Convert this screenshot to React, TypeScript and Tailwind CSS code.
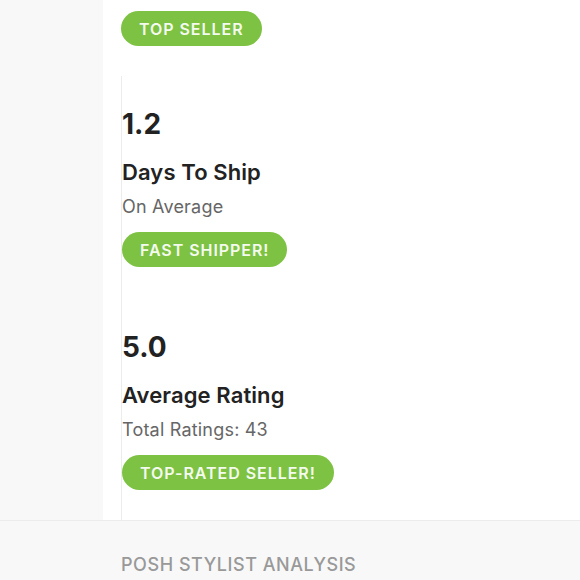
import React from 'react';

const stats = [
  { value: '1.2', label: 'Days To Ship', sub: 'On Average', badge: 'FAST SHIPPER!' },
  { value: '5.0', label: 'Average Rating', sub: 'Total Ratings: 43', badge: 'TOP-RATED SELLER!' },
];

function Badge({ children }: { children: React.ReactNode }) {
  return (
    <span className="inline-flex h-[35px] items-center rounded-full bg-[#7dc242] px-[18px] text-[16px] font-semibold tracking-[0.95px] text-[#f4faee]">
      {children}
    </span>
  );
}

export default function App() {
  return (
    <div className="flex h-[580px] w-[580px] flex-col overflow-hidden bg-[#f8f8f8] font-['Inter',sans-serif]">
      <div className="flex h-[521px] shrink-0 border-b border-[#ececec]">
        <div className="w-[103px] shrink-0" />
        <div className="flex flex-1 flex-col bg-white pl-[18px] pt-[11px]">
          <div>
            <Badge>TOP SELLER</Badge>
          </div>
          <div className="mt-[30px] flex flex-1 flex-col border-l border-[#ececec] pt-[31px]">
            {stats.map((s, i) => (
              <div key={s.value} className={i > 0 ? 'mt-[63px]' : ''}>
                <div className="text-[28px] leading-[34px] font-bold text-[#222]">{s.value}</div>
                <div className="mt-[18px] text-[22px] leading-[26px] font-semibold tracking-[0.1px] text-[#222]">{s.label}</div>
                <div className="mt-[10px] text-[18px] leading-[24px] tracking-[0.2px] text-[#666]">{s.sub}</div>
                <div className="mt-[13px]">
                  <Badge>{s.badge}</Badge>
                </div>
              </div>
            ))}
          </div>
        </div>
      </div>
      <div className="pl-[121px] pt-[32px] text-[18px] leading-[24px] font-medium tracking-[0.55px] text-[#999]">
        POSH STYLIST ANALYSIS
      </div>
    </div>
  );
}
